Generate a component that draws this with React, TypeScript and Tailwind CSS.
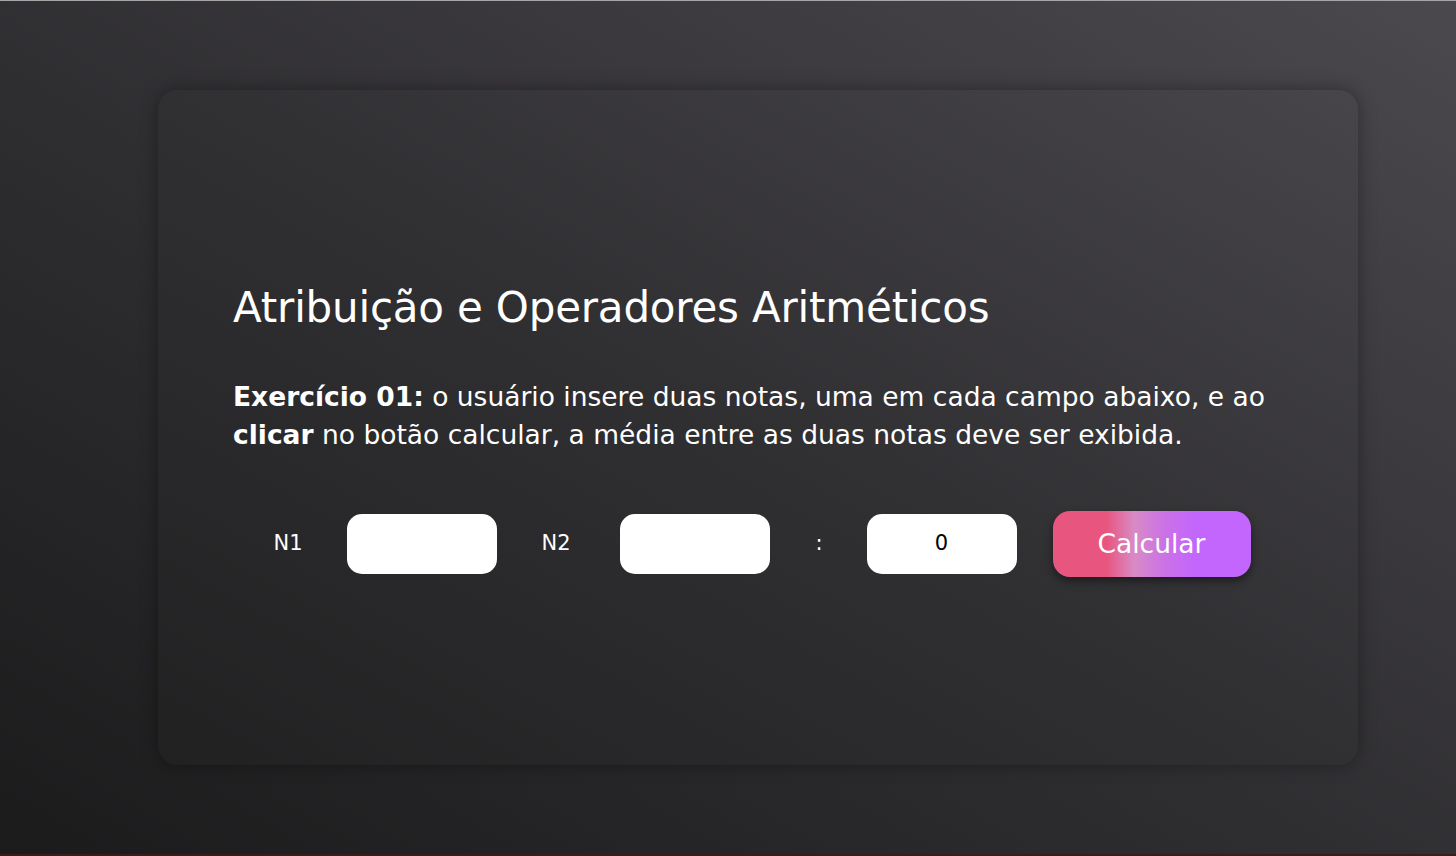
export default function App() {
  return (
    <div
      className="h-[856px] w-full flex items-center pl-[158px] border-t border-[#a6a6a6] border-b-2 border-b-[#3a1c1c] bg-[linear-gradient(to_top_right,#1b1b1c_0%,#2e2d30_45%,#4b484e_100%)]"
      style={{ fontFamily: '"DejaVu Sans", sans-serif' }}
    >
      <div className="w-[1200px] h-[675px] rounded-[20px] bg-[linear-gradient(to_top_right,#212122_0%,#302f32_50%,#47454a_100%)] shadow-[0_0_18px_rgba(0,0,0,0.35)] flex flex-col pt-[192px] px-[75px]">
        <h1 className="text-white text-[42px] font-normal leading-[52px] tracking-[-0.2px]">
          Atribuição e Operadores Aritméticos
        </h1>
        <p className="text-white text-[26.5px] leading-[38px] mt-[44px]">
          <b className="font-bold">Exercício 01:</b> o usuário insere duas notas, uma em cada campo abaixo, e ao{" "}
          <b className="font-bold">clicar</b> no botão calcular, a média entre as duas notas deve ser exibida.
        </p>
        <div className="flex items-center justify-center mt-[57px] pl-[8px] text-white text-[21px]">
          <span className="w-[27px]">N1</span>
          <input className="ml-[46px] w-[150px] h-[60px] rounded-[15px] bg-white outline-none text-black text-center" />
          <span className="ml-[45px] w-[33px]">N2</span>
          <input className="ml-[45px] w-[150px] h-[60px] rounded-[15px] bg-white outline-none text-black text-center" />
          <span className="ml-[46px] w-[5px]">:</span>
          <div className="ml-[46px] w-[150px] h-[60px] rounded-[15px] bg-white text-black flex items-center justify-center text-[21px]">
            0
          </div>
          <button className="ml-[36px] w-[198px] h-[66px] rounded-[17px] text-white text-[26.5px] bg-[linear-gradient(to_right,#e8557e_0%,#e8557e_27%,#d88bc6_41%,#cb72e6_56%,#c266fe_72%,#c266fe_100%)] shadow-[0_4px_8px_rgba(0,0,0,0.45)]">
            Calcular
          </button>
        </div>
      </div>
    </div>
  );
}
